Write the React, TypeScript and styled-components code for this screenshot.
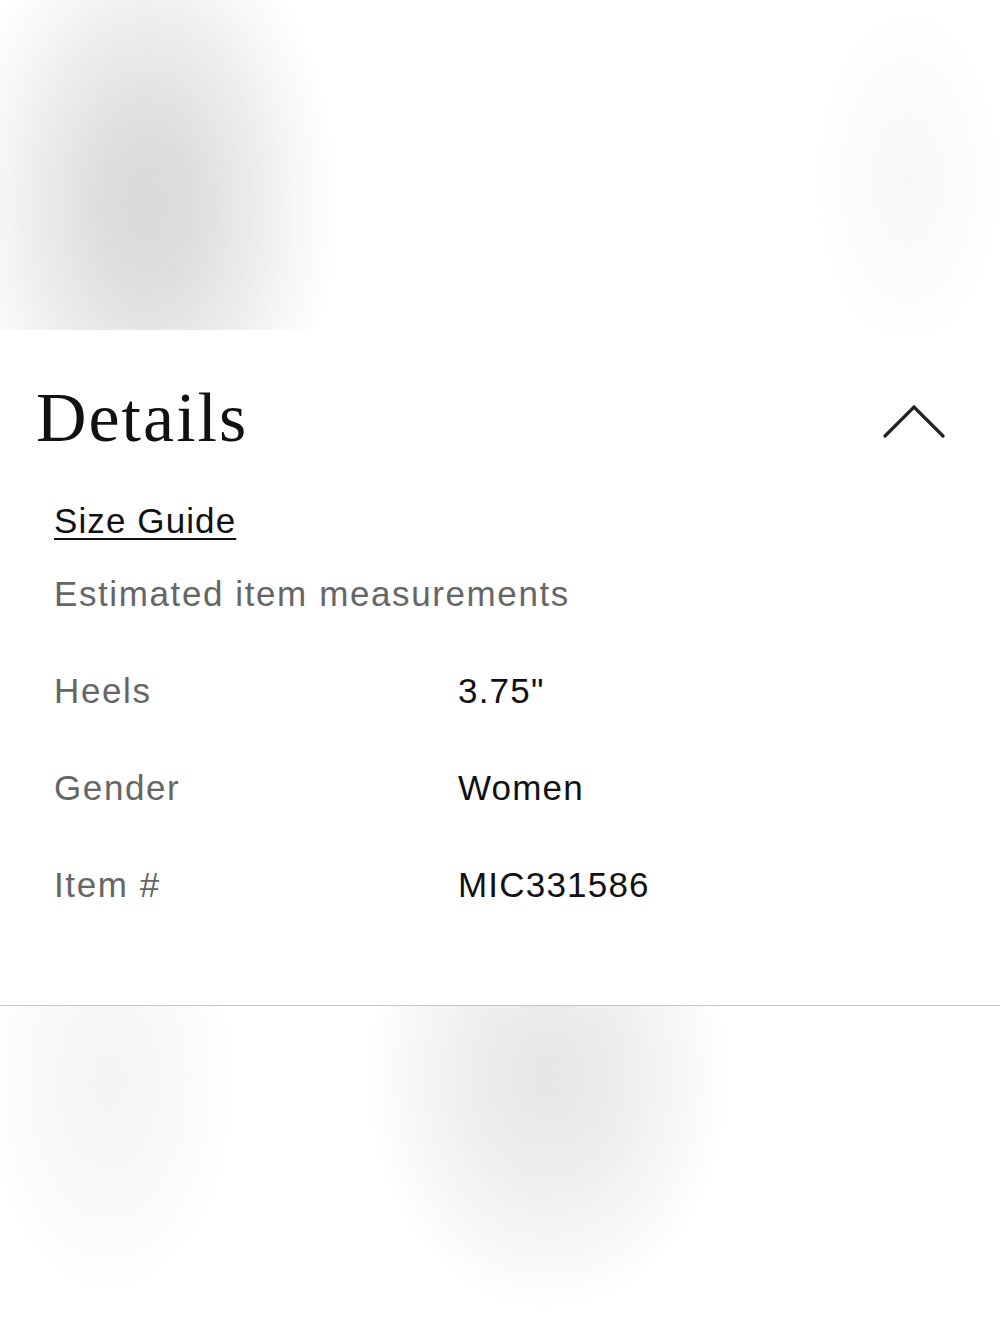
import React from "react"
import styled, { createGlobalStyle } from "styled-components"

const GlobalStyle = createGlobalStyle`
	html, body {
		margin: 0;
		padding: 0;
		background: #ffffff;
	}
	body {
		font-family: "Liberation Sans", Arial, sans-serif;
		color: #111111;
	}
	* {
		box-sizing: border-box;
	}
`

const Page = styled.div`
	width: 1000px;
	min-height: 1330px;
	display: flex;
	flex-direction: column;
	background: #ffffff;
`

// blurred product imagery above and below the panel
const TopBlur = styled.div`
	height: 330px;
	background:
		radial-gradient(ellipse 95px 175px at 908px 180px, rgba(246, 246, 246, 0.85), rgba(255, 255, 255, 0) 100%),
		radial-gradient(ellipse 190px 300px at 147px 205px, #d9d9d9 0%, #dedede 25%, #ebebeb 55%, #f7f7f7 80%, rgba(255, 255, 255, 0) 100%),
		#ffffff;
`

const BottomBlur = styled.div`
	flex: 1;
	min-height: 324px;
	background:
		radial-gradient(ellipse 125px 215px at 108px 75px, #f4f4f4 0%, #f9f9f9 55%, rgba(255, 255, 255, 0) 100%),
		radial-gradient(ellipse 180px 235px at 548px 70px, #e6e6e6 0%, #ececec 35%, #f7f7f7 75%, rgba(255, 255, 255, 0) 100%),
		#ffffff;
`

const DetailsSection = styled.section`
	padding: 53px 0 100px;
	border-bottom: 1px solid #c6c6c6;
	background: #ffffff;
`

const Header = styled.div`
	display: flex;
	align-items: center;
	justify-content: space-between;
	padding: 0 55px 0 36px;
`

const Heading = styled.h2`
	margin: 0;
	font-family: "Liberation Serif", "Times New Roman", serif;
	font-weight: 400;
	font-size: 70px;
	line-height: 70px;
	letter-spacing: 2px;
	color: #111111;
`

const ToggleButton = styled.button`
	display: flex;
	margin: 6px 0 0;
	padding: 0;
	border: none;
	background: none;
	cursor: pointer;
`

const Body = styled.div`
	display: flex;
	flex-direction: column;
	align-items: flex-start;
	padding: 48px 54px 0;
`

const SizeGuideLink = styled.a`
	font-size: 35px;
	line-height: 40px;
	letter-spacing: 1.1px;
	color: #111111;
	text-decoration: underline;
	text-decoration-thickness: 2px;
	text-underline-offset: 5px;
	cursor: pointer;
`

const Caption = styled.p`
	margin: 33px 0 0;
	font-size: 35px;
	line-height: 40px;
	letter-spacing: 1.6px;
	color: #666666;
`

const SpecGrid = styled.dl`
	display: grid;
	grid-template-columns: 404px 1fr;
	row-gap: 57px;
	margin: 57px 0 0;
	width: 100%;
`

const SpecLabel = styled.dt<{ muted?: boolean }>`
	margin: 0;
	font-size: 35px;
	line-height: 40px;
	letter-spacing: 1.6px;
	color: ${props => props.muted ? "#666666" : "#111111"};
`

const SpecValue = styled.dd`
	margin: 0;
	font-size: 35px;
	line-height: 40px;
	letter-spacing: 1.2px;
	color: #111111;
`

const specs = [
	{ label: "Heels", value: "3.75\"" },
	{ label: "Gender", value: "Women" },
	{ label: "Item #", value: "MIC331586" },
]

const ChevronUp = () => (
	<svg width="62" height="35" viewBox="0 0 62 35" fill="none">
		<polyline points="2,32 31,3 60,32" stroke="#222222" strokeWidth="3.2" strokeLinecap="round" strokeLinejoin="miter" />
	</svg>
)

const App = (): JSX.Element => {
	return (
		<>
			<GlobalStyle />
			<Page>
				<TopBlur />
				<DetailsSection>
					<Header>
						<Heading>Details</Heading>
						<ToggleButton aria-label="Collapse details">
							<ChevronUp />
						</ToggleButton>
					</Header>
					<Body>
						<SizeGuideLink>Size Guide</SizeGuideLink>
						<Caption>Estimated item measurements</Caption>
						<SpecGrid>
							{specs.map(spec => (
								<React.Fragment key={spec.label}>
									<SpecLabel muted>{spec.label}</SpecLabel>
									<SpecValue>{spec.value}</SpecValue>
								</React.Fragment>
							))}
						</SpecGrid>
					</Body>
				</DetailsSection>
				<BottomBlur />
			</Page>
		</>
	)
}

export default App
